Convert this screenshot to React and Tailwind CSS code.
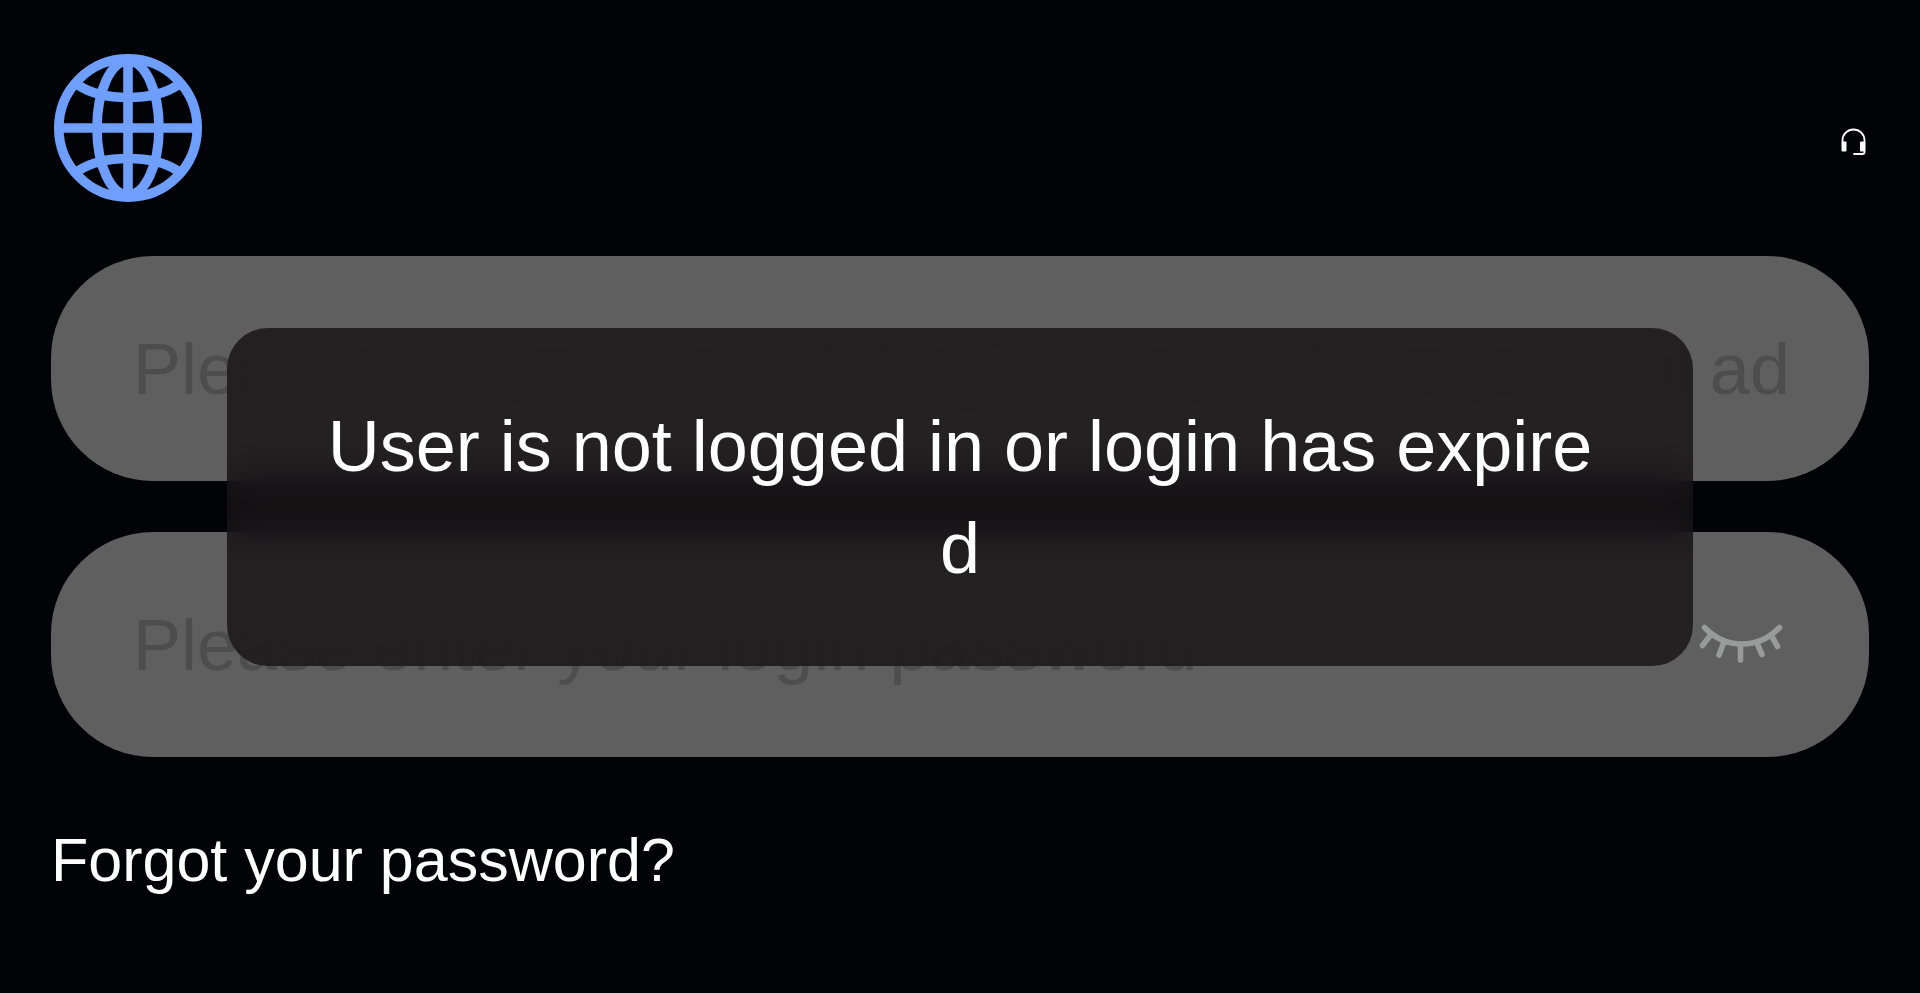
import { useState } from "react";

function GlobeIcon() {
  return (
    <svg
      viewBox="0 0 154 154"
      className="h-[154px] w-[154px]"
      fill="none"
      stroke="#6e9fff"
      strokeWidth="9.600"
      aria-hidden="true"
    >
      <circle cx="77" cy="77" r="69.200" />
      <path d="M77 8v138M8 77h138" />
      <ellipse cx="77" cy="77" rx="31" ry="67" />
      <path d="M27 34c12 8 30 12.500 50 12.500s38-4.500 50-12.500" />
      <path d="M27 120c12-8 30-12.500 50-12.500s38 4.500 50 12.500" />
    </svg>
  );
}

function HeadsetIcon() {
  return (
    <svg
      viewBox="0 0 30 30"
      className="h-[30px] w-[30px]"
      fill="none"
      stroke="#fff"
      strokeWidth="1.8"
      aria-hidden="true"
    >
      <path d="M3.500 15v-1.500a11 11 0 0 1 22 0V25a2 2 0 0 1-2 2H15" strokeLinecap="round" />
      <rect x="2.500" y="14.500" width="5" height="10" rx="1" fill="#fff" stroke="none" />
      <rect x="21" y="14.500" width="5.200" height="10" rx="1" fill="#fff" stroke="none" />
    </svg>
  );
}

function ClosedEyeIcon() {
  return (
    <svg
      viewBox="0 0 92 92"
      className="h-[92px] w-[92px]"
      fill="none"
      stroke="#999b9a"
      strokeWidth="5.600"
      strokeLinecap="round"
      aria-hidden="true"
    >
      <path d="M9.500 28.500c21 22 54 22 75 0" />
      <path d="M16 35.500l-8.500 11M29 43l-5 13M45.500 46v15M61.500 43l5.500 12.500M76 36l6.500 11.500" />
    </svg>
  );
}

function Field({ label, type = "text", value, onChange, children }) {
  return (
    <div className="flex items-center rounded-[102px] bg-[#5f5f5f] px-[82px] py-[61px]">
      <input
        type={type}
        aria-label={label}
        placeholder={label}
        value={value}
        onChange={(e) => onChange(e.target.value)}
        className="h-[103px] min-w-0 flex-1 bg-transparent text-[72px] text-white outline-none placeholder:text-[#4d4d4d]"
      />
      {children}
    </div>
  );
}

function Toast({ message }) {
  return (
    <div className="pointer-events-none fixed inset-0 flex items-center justify-center">
      <div
        role="alert"
        className="max-w-[76.4%] rounded-[41px] bg-[#141213]/80 px-24 py-[67px] text-center text-[72px] leading-[102px] break-all text-white backdrop-blur-[20px]"
      >
        {message}
      </div>
    </div>
  );
}

export default function App() {
  const [account, setAccount] = useState("");
  const [password, setPassword] = useState("");
  const [showPassword, setShowPassword] = useState(false);

  return (
    <div className="min-h-screen bg-[#020307] p-[51px] font-['Liberation_Sans',Arial,sans-serif] text-white">
      <header className="flex items-center justify-between">
        <button type="button" aria-label="Language">
          <GlobeIcon />
        </button>
        <button type="button" aria-label="Customer service" className="pt-7">
          <HeadsetIcon />
        </button>
      </header>

      <form className="mt-[51px] flex flex-col gap-[51px]">
        <Field
          label="Please enter your mobile phone number or email address"
          value={account}
          onChange={setAccount}
        />
        <Field
          label="Please enter your login password"
          type={showPassword ? "text" : "password"}
          value={password}
          onChange={setPassword}
        >
          <button
            type="button"
            aria-label="Show password"
            onClick={() => setShowPassword(!showPassword)}
          >
            <ClosedEyeIcon />
          </button>
        </Field>
      </form>

      <a href="#forgot" className="mt-[57px] inline-block text-[61px] leading-[92px]">
        Forgot your password?
      </a>

      <Toast message="User is not logged in or login has expired" />
    </div>
  );
}
